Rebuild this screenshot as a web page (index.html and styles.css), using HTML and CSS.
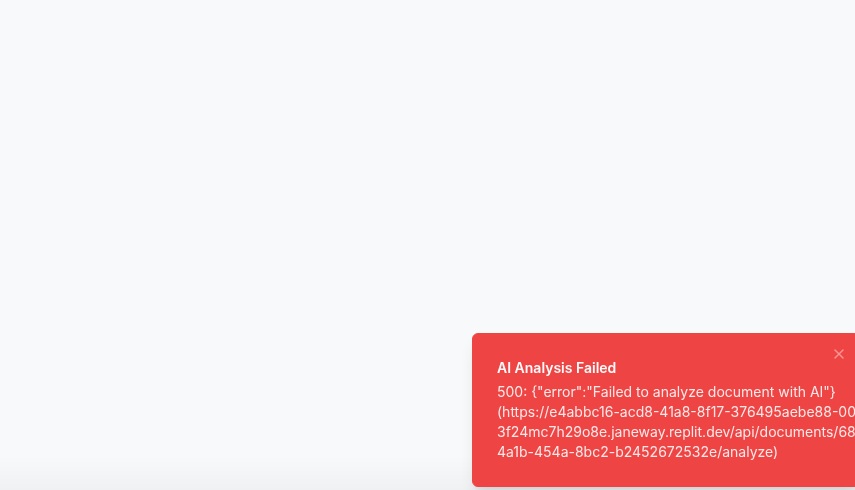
FILE: index.html
```html
<!DOCTYPE html>
<html lang="en">
<head>
<meta charset="utf-8">
<title>Toast</title>
<link rel="stylesheet" href="styles.css">
</head>
<body>
<main class="page"></main>
<div class="bottom-shade"></div>
<section class="toast" role="status">
  <div class="toast-body">
    <div class="toast-title">AI Analysis Failed</div>
    <div class="toast-desc">
      <span class="line">500: {"error":"Failed to analyze document with AI"}</span>
      <span class="line">(https://e4abbc16-acd8-41a8-8f17-376495aebe88-00</span>
      <span class="line">3f24mc7h29o8e.janeway.replit.dev/api/documents/68</span>
      <span class="line">4a1b-454a-8bc2-b2452672532e/analyze)</span>
    </div>
  </div>
  <button class="toast-close" aria-label="Close">
    <svg width="16" height="16" viewBox="0 0 24 24" fill="none" stroke="currentColor" stroke-width="2" stroke-linecap="round" stroke-linejoin="round"><path d="M18 6 6 18"/><path d="m6 6 12 12"/></svg>
  </button>
</section>
</body>
</html>
```

FILE: styles.css
```css
html, body {
  margin: 0;
  padding: 0;
  width: 100%;
  height: 100%;
  overflow: hidden;
  background: #f8f9fa;
  font-family: Inter, "Noto Sans", "Liberation Sans", sans-serif;
}

.page {
  min-height: 100%;
}

.bottom-shade {
  position: fixed;
  left: 0;
  right: 0;
  bottom: 0;
  height: 34px;
  background: linear-gradient(to bottom, rgba(0, 0, 0, 0), rgba(0, 0, 0, 0.03));
  pointer-events: none;
}

.toast {
  position: fixed;
  left: 472px;
  top: 333px;
  width: 388px;
  box-sizing: border-box;
  display: flex;
  align-items: center;
  padding: 24px 32px 24px 24px;
  border: 1px solid #ef4444;
  border-radius: 6px;
  background: #ef4444;
  color: #fafafa;
  box-shadow: 0 10px 15px -3px rgba(0, 0, 0, 0.1), 0 4px 6px -4px rgba(0, 0, 0, 0.1);
}

.toast-body {
  display: grid;
  gap: 4px;
}

.toast-title {
  font-size: 14px;
  line-height: 20px;
  font-weight: 600;
}

.toast-desc {
  font-size: 14px;
  line-height: 20px;
  opacity: 0.9;
  display: flex;
  flex-direction: column;
}

.line {
  white-space: nowrap;
}

.toast-close {
  position: absolute;
  top: 8px;
  right: 8px;
  padding: 4px;
  border: 0;
  background: transparent;
  color: #fca5a5;
  opacity: 0.85;
  display: flex;
  border-radius: 6px;
}
```
